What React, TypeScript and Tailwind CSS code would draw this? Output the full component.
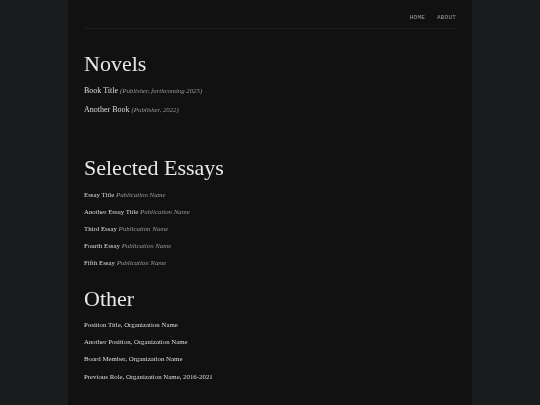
const novels = [
  { title: "Book Title", note: "(Publisher, forthcoming 2025)" },
  { title: "Another Book", note: "(Publisher, 2022)" },
];

const essays = [
  "Essay Title",
  "Another Essay Title",
  "Third Essay",
  "Fourth Essay",
  "Fifth Essay",
];

const other = [
  "Position Title, Organization Name",
  "Another Position, Organization Name",
  "Board Member, Organization Name",
  "Previous Role, Organization Name, 2016-2021",
];

const App = () => {
  return (
    <div className="min-h-[405px] w-full bg-[#1b1c1e] flex justify-center font-['Liberation_Serif',serif] antialiased">
      <div className="w-[404px] bg-[#111111] px-4 pb-6 will-change-transform">
        <header className="h-[29px] border-b border-[#1e1e1e] flex items-center justify-end gap-3 pt-[7px] font-['Liberation_Mono',monospace] text-[6px] tracking-[0.2px] text-[#9a9a9a]">
          <span>HOME</span>
          <span>ABOUT</span>
        </header>

        <h2 className="mt-[22px] text-[22px] leading-[26px] text-[#e8e8e8]">Novels</h2>
        <ul className="mt-[4px]">
          {novels.map((n) => (
            <li key={n.title} className="text-[8px] leading-[19px] text-[#dcdcdc]">
              {n.title} <em className="text-[6.8px] text-[#9a9a9a]">{n.note}</em>
            </li>
          ))}
        </ul>

        <h2 className="mt-[36px] text-[22px] leading-[26px] text-[#e8e8e8]">Selected Essays</h2>
        <ul className="mt-[4.5px]">
          {essays.map((e) => (
            <li key={e} className="text-[6.85px] leading-[17.1px] text-[#dcdcdc]">
              {e} <em className="text-[6.85px] text-[#9a9a9a]">Publication Name</em>
            </li>
          ))}
        </ul>

        <h2 className="mt-[15px] text-[22px] leading-[26px] text-[#e8e8e8]">Other</h2>
        <ul className="mt-[4px]">
          {other.map((o) => (
            <li key={o} className="text-[6.85px] leading-[17.2px] text-[#dcdcdc]">
              {o}
            </li>
          ))}
        </ul>
      </div>
    </div>
  );
};

export default App;
